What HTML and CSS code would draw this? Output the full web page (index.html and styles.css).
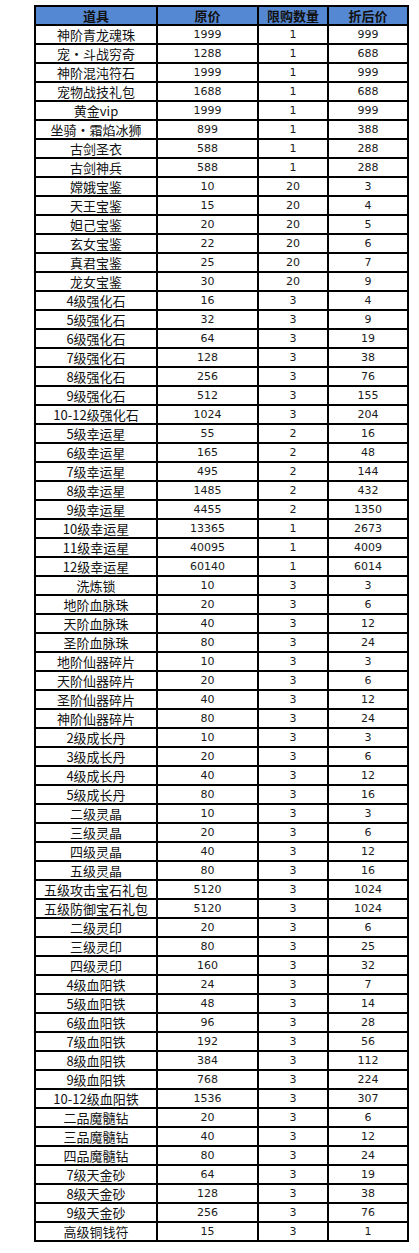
FILE: index.html
```html
<!DOCTYPE html>
<html lang="zh">
<head>
<meta charset="utf-8">
<title>道具折扣表</title>
<link rel="stylesheet" href="styles.css">
</head>
<body>
<table class="price-table">
<colgroup>
<col class="c-name"><col class="c-orig"><col class="c-limit"><col class="c-disc">
</colgroup>
<thead>
<tr><th>道具</th><th>原价</th><th>限购数量</th><th>折后价</th></tr>
</thead>
<tbody>
<tr><td class="name">神阶青龙魂珠</td><td>1999</td><td>1</td><td>999</td></tr>
<tr><td class="name">宠・斗战穷奇</td><td>1288</td><td>1</td><td>688</td></tr>
<tr><td class="name">神阶混沌符石</td><td>1999</td><td>1</td><td>999</td></tr>
<tr><td class="name">宠物战技礼包</td><td>1688</td><td>1</td><td>688</td></tr>
<tr><td class="name">黄金vip</td><td>1999</td><td>1</td><td>999</td></tr>
<tr><td class="name">坐骑・霜焰冰狮</td><td>899</td><td>1</td><td>388</td></tr>
<tr><td class="name">古剑圣衣</td><td>588</td><td>1</td><td>288</td></tr>
<tr><td class="name">古剑神兵</td><td>588</td><td>1</td><td>288</td></tr>
<tr><td class="name">嫦娥宝鉴</td><td>10</td><td>20</td><td>3</td></tr>
<tr><td class="name">天王宝鉴</td><td>15</td><td>20</td><td>4</td></tr>
<tr><td class="name">妲己宝鉴</td><td>20</td><td>20</td><td>5</td></tr>
<tr><td class="name">玄女宝鉴</td><td>22</td><td>20</td><td>6</td></tr>
<tr><td class="name">真君宝鉴</td><td>25</td><td>20</td><td>7</td></tr>
<tr><td class="name">龙女宝鉴</td><td>30</td><td>20</td><td>9</td></tr>
<tr><td class="name">4级强化石</td><td>16</td><td>3</td><td>4</td></tr>
<tr><td class="name">5级强化石</td><td>32</td><td>3</td><td>9</td></tr>
<tr><td class="name">6级强化石</td><td>64</td><td>3</td><td>19</td></tr>
<tr><td class="name">7级强化石</td><td>128</td><td>3</td><td>38</td></tr>
<tr><td class="name">8级强化石</td><td>256</td><td>3</td><td>76</td></tr>
<tr><td class="name">9级强化石</td><td>512</td><td>3</td><td>155</td></tr>
<tr><td class="name">10-12级强化石</td><td>1024</td><td>3</td><td>204</td></tr>
<tr><td class="name">5级幸运星</td><td>55</td><td>2</td><td>16</td></tr>
<tr><td class="name">6级幸运星</td><td>165</td><td>2</td><td>48</td></tr>
<tr><td class="name">7级幸运星</td><td>495</td><td>2</td><td>144</td></tr>
<tr><td class="name">8级幸运星</td><td>1485</td><td>2</td><td>432</td></tr>
<tr><td class="name">9级幸运星</td><td>4455</td><td>2</td><td>1350</td></tr>
<tr><td class="name">10级幸运星</td><td>13365</td><td>1</td><td>2673</td></tr>
<tr><td class="name">11级幸运星</td><td>40095</td><td>1</td><td>4009</td></tr>
<tr><td class="name">12级幸运星</td><td>60140</td><td>1</td><td>6014</td></tr>
<tr><td class="name">洗炼锁</td><td>10</td><td>3</td><td>3</td></tr>
<tr><td class="name">地阶血脉珠</td><td>20</td><td>3</td><td>6</td></tr>
<tr><td class="name">天阶血脉珠</td><td>40</td><td>3</td><td>12</td></tr>
<tr><td class="name">圣阶血脉珠</td><td>80</td><td>3</td><td>24</td></tr>
<tr><td class="name">地阶仙器碎片</td><td>10</td><td>3</td><td>3</td></tr>
<tr><td class="name">天阶仙器碎片</td><td>20</td><td>3</td><td>6</td></tr>
<tr><td class="name">圣阶仙器碎片</td><td>40</td><td>3</td><td>12</td></tr>
<tr><td class="name">神阶仙器碎片</td><td>80</td><td>3</td><td>24</td></tr>
<tr><td class="name">2级成长丹</td><td>10</td><td>3</td><td>3</td></tr>
<tr><td class="name">3级成长丹</td><td>20</td><td>3</td><td>6</td></tr>
<tr><td class="name">4级成长丹</td><td>40</td><td>3</td><td>12</td></tr>
<tr><td class="name">5级成长丹</td><td>80</td><td>3</td><td>16</td></tr>
<tr><td class="name">二级灵晶</td><td>10</td><td>3</td><td>3</td></tr>
<tr><td class="name">三级灵晶</td><td>20</td><td>3</td><td>6</td></tr>
<tr><td class="name">四级灵晶</td><td>40</td><td>3</td><td>12</td></tr>
<tr><td class="name">五级灵晶</td><td>80</td><td>3</td><td>16</td></tr>
<tr><td class="name">五级攻击宝石礼包</td><td>5120</td><td>3</td><td>1024</td></tr>
<tr><td class="name">五级防御宝石礼包</td><td>5120</td><td>3</td><td>1024</td></tr>
<tr><td class="name">二级灵印</td><td>20</td><td>3</td><td>6</td></tr>
<tr><td class="name">三级灵印</td><td>80</td><td>3</td><td>25</td></tr>
<tr><td class="name">四级灵印</td><td>160</td><td>3</td><td>32</td></tr>
<tr><td class="name">4级血阳铁</td><td>24</td><td>3</td><td>7</td></tr>
<tr><td class="name">5级血阳铁</td><td>48</td><td>3</td><td>14</td></tr>
<tr><td class="name">6级血阳铁</td><td>96</td><td>3</td><td>28</td></tr>
<tr><td class="name">7级血阳铁</td><td>192</td><td>3</td><td>56</td></tr>
<tr><td class="name">8级血阳铁</td><td>384</td><td>3</td><td>112</td></tr>
<tr><td class="name">9级血阳铁</td><td>768</td><td>3</td><td>224</td></tr>
<tr><td class="name">10-12级血阳铁</td><td>1536</td><td>3</td><td>307</td></tr>
<tr><td class="name">二品魔髓钻</td><td>20</td><td>3</td><td>6</td></tr>
<tr><td class="name">三品魔髓钻</td><td>40</td><td>3</td><td>12</td></tr>
<tr><td class="name">四品魔髓钻</td><td>80</td><td>3</td><td>24</td></tr>
<tr><td class="name">7级天金砂</td><td>64</td><td>3</td><td>19</td></tr>
<tr><td class="name">8级天金砂</td><td>128</td><td>3</td><td>38</td></tr>
<tr><td class="name">9级天金砂</td><td>256</td><td>3</td><td>76</td></tr>
<tr><td class="name">高级铜钱符</td><td>15</td><td>3</td><td>1</td></tr>
</tbody>
</table>
</body>
</html>
```
FILE: styles.css
```css
html, body {
  margin: 0;
  padding: 0;
  background: #ffffff;
}

body {
  padding: 5px 0 0 34px;
}

.price-table {
  border-collapse: collapse;
  table-layout: fixed;
  width: 373px;
  font-family: "DejaVu Sans", "Noto Sans CJK SC", sans-serif;
  font-size: 11px;
  color: #1a1a1a;
}

.c-name { width: 122px; }
.c-orig { width: 101px; }
.c-limit { width: 70px; }
.c-disc { width: 80px; }

.price-table th,
.price-table td {
  border: 2px solid #000;
  padding: 0;
  height: 17px;
  line-height: 17px;
  text-align: center;
  white-space: nowrap;
  overflow: hidden;
}

.price-table th {
  background: #5588d2;
  font-family: "Noto Sans CJK SC", sans-serif;
  font-weight: 700;
  font-size: 13px;
  color: #111;
}

.price-table td.name {
  font-family: "Noto Sans CJK SC", sans-serif;
  font-size: 13px;
  color: #111;
}
```
